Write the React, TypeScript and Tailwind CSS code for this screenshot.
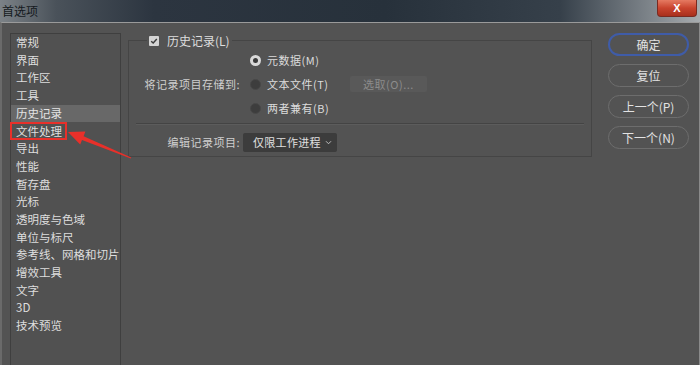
const ITEMS = [
  '常规', '界面', '工作区', '工具', '历史记录', '文件处理', '导出', '性能', '暂存盘',
  '光标', '透明度与色域', '单位与标尺', '参考线、网格和切片', '增效工具', '文字', '3D', '技术预览',
]

const BUTTONS = ['确定', '复位', '上一个(P)', '下一个(N)']

function Radio({ checked }: { checked?: boolean }) {
  return checked ? (
    <span className="w-[11px] h-[11px] rounded-full bg-[#d9d9d9] flex items-center justify-center shrink-0">
      <span className="w-[5px] h-[5px] rounded-full bg-[#3a3a3a]" />
    </span>
  ) : (
    <span className="w-[11px] h-[11px] rounded-full bg-[#3d3d3d] border border-[#484848] shrink-0" />
  )
}

export default function App() {
  return (
    <div className="relative w-[700px] h-[365px] overflow-hidden flex flex-col bg-[#535353] font-['Noto_Sans_CJK_SC','Liberation_Sans',sans-serif] text-[#dcdcdc]">
      {/* title bar */}
      <div className="h-[22px] shrink-0 flex items-start justify-between bg-[linear-gradient(90deg,#7c8287_0%,#4a525a_8%,#2c3540_22%,#27313b_55%,#36404a_80%,#8a9095_95%,#a8adb0_100%)]">
        <span className="pl-[2px] pt-[3px] text-[12px] leading-[16px] text-[#151a20]">首选项</span>
        <div className="mr-[3px] w-[40px] h-[17px] rounded-b-[4px] border border-[#7a2a20] border-t-0 bg-[linear-gradient(180deg,#e57a62_0%,#c9442e_50%,#a8301c_100%)] flex items-center justify-center">
          <span className="text-white text-[11px] font-bold leading-none font-['Liberation_Sans',sans-serif]">X</span>
        </div>
      </div>

      {/* body */}
      <div className="flex-1 flex border-t border-[#9a9a9a] border-l-2 border-l-[#6a6a6a] border-r border-r-[#8a8a8a] pl-[8px] pt-[10px]">
        {/* category list */}
        <div className="w-[111px] shrink-0 border border-[#3f3f3f] border-b-0 bg-[#515151] text-[11.5px]">
          {ITEMS.map((it, i) => (
            <div
              key={it}
              className={
                'h-[17.7px] flex items-center pl-[5px] leading-none whitespace-nowrap ' +
                (i === 4 ? 'bg-[#686868] text-[#e4e4e4]' : 'text-[#dedede]')
              }
            >
              {it}
            </div>
          ))}
        </div>

        {/* history group */}
        <div className="ml-[7px] mt-[7px] w-[464px] h-[117px] shrink-0 relative border border-[#454545] text-[11px] tracking-[0.5px] pt-[7px] pb-[4px]">
          <div className="absolute -top-[8px] left-[18px] flex items-center gap-[8px] px-[2px] bg-[#535353] h-[15px]">
            <span className="w-[10px] h-[10px] bg-[#d4d4d4] rounded-[1px] flex items-center justify-center">
              <svg viewBox="0 0 10 10" className="w-[8px] h-[8px]">
                <path d="M1.5 5.2 L4 7.5 L8.5 2.5" fill="none" stroke="#3a3a3a" strokeWidth="1.8" />
              </svg>
            </span>
            <span className="text-[12px] tracking-normal text-[#dedede]">历史记录(L)</span>
          </div>

          <div className="flex">
            <div className="w-[111px] h-[72px] flex items-center justify-end text-[#cfcfcf]">将记录项目存储到:</div>
            <div className="ml-[10px] flex flex-col">
              <div className="h-[24px] flex items-center gap-[6px]">
                <Radio checked />
                <span>元数据(M)</span>
              </div>
              <div className="h-[24px] flex items-center">
                <Radio />
                <span className="ml-[6px] w-[83px]">文本文件(T)</span>
                <span className="w-[77px] h-[16px] bg-[#595959] rounded-[2px] text-[#8c8c8c] flex items-center justify-center">选取(O)...</span>
              </div>
              <div className="h-[24px] flex items-center gap-[6px]">
                <Radio />
                <span>两者兼有(B)</span>
              </div>
            </div>
          </div>

          <div className="mx-[7px] mt-[3px] border-t border-[#444444] border-b border-b-[#5c5c5c]" />

          <div className="flex items-center mt-[8px]">
            <div className="w-[111px] text-right text-[#cfcfcf]">编辑记录项目:</div>
            <div className="ml-[3px] w-[94px] h-[19px] bg-[#3c3c3c] rounded-[2px] flex items-center justify-between pl-[10px] pr-[5px] text-[11px] tracking-[0.3px] text-[#e0e0e0]">
              <span>仅限工作进程</span>
              <svg viewBox="0 0 8 6" className="w-[7px] h-[5px]">
                <path d="M1 1.5 L4 4.5 L7 1.5" fill="none" stroke="#bdbdbd" strokeWidth="1.2" />
              </svg>
            </div>
          </div>
        </div>

        {/* buttons */}
        <div className="ml-[16px] w-[81px] shrink-0 flex flex-col gap-[8px] text-[12px]">
          {BUTTONS.map((b, i) => (
            <div
              key={b}
              className={
                'h-[23px] rounded-full flex items-center justify-center text-[#e2e2e2] ' +
                (i === 0 ? 'border-2 border-[#3f5ca8]' : 'border-[1.5px] border-[#6d6d6d]')
              }
            >
              {b}
            </div>
          ))}
        </div>
      </div>

      {/* annotation */}
      <div className="absolute left-[10px] top-[122px] w-[57px] h-[18px] border-2 border-[#e8302a] pointer-events-none" />
      <svg className="absolute left-0 top-0 pointer-events-none" width="700" height="365" viewBox="0 0 700 365">
        <polygon
          points="68,132 85.4,131.5 83.6,136.2 131.2,157.5 130.8,158.5 82,139.9 80.2,144.5"
          fill="#e8302a"
        />
      </svg>
    </div>
  )
}
